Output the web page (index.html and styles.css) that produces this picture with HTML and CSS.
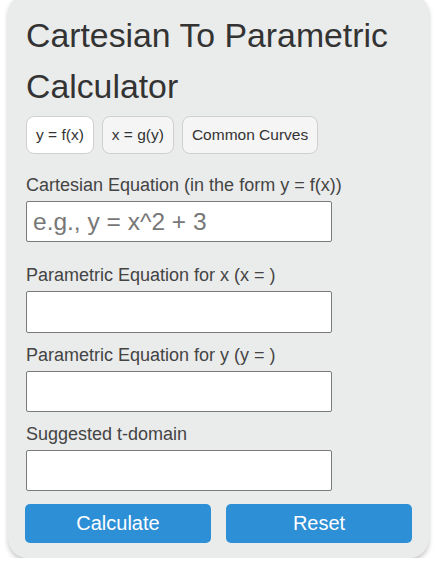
FILE: index.html
```html
<!DOCTYPE html>
<html>
<head>
<meta charset="utf-8">
<link rel="stylesheet" href="styles.css">
</head>
<body>
<div class="card">
  <h1 class="title">Cartesian To Parametric Calculator</h1>
  <div class="tabs">
    <button class="tab active">y = f(x)</button>
    <button class="tab">x = g(y)</button>
    <button class="tab">Common Curves</button>
  </div>
  <div class="field first">
    <label class="label">Cartesian Equation (in the form y = f(x))</label>
    <input class="input" type="text" placeholder="e.g., y = x^2 + 3">
  </div>
  <div class="field wide">
    <label class="label">Parametric Equation for x (x = )</label>
    <input class="input tall" type="text">
  </div>
  <div class="field">
    <label class="label">Parametric Equation for y (y = )</label>
    <input class="input" type="text">
  </div>
  <div class="field">
    <label class="label">Suggested t-domain</label>
    <input class="input" type="text">
  </div>
  <div class="actions">
    <button class="btn">Calculate</button>
    <button class="btn">Reset</button>
  </div>
</div>
</body>
</html>
```
FILE: styles.css
```css
html, body {
  margin: 0;
  padding: 0;
  background: #ffffff;
}
body {
  font-family: "Liberation Sans", Arial, sans-serif;
  color: #333;
}
.card {
  box-sizing: border-box;
  width: 421px;
  margin: -6px 0 0 8px;
  padding: 16px 17px 15px 17px;
  background: #eaebeb;
  border-radius: 20px;
  box-shadow: 0 3px 5px rgba(0, 0, 0, 0.22);
}
.title {
  margin: 0 0 4px 1px;
  font-size: 33.8px;
  font-weight: normal;
  line-height: 51px;
  color: #333;
}
.tabs {
  display: flex;
  gap: 8px;
  padding-left: 1px;
}
.tab {
  height: 38px;
  padding: 0 9px;
  border: 1px solid #cfcfcf;
  border-radius: 8px;
  background: #f5f5f5;
  font-family: "Liberation Sans", Arial, sans-serif;
  font-size: 15.5px;
  color: #333;
}
.tab.active {
  background: #ffffff;
}
.field {
  display: flex;
  flex-direction: column;
  align-items: flex-start;
  gap: 5px;
  margin-top: 11px;
  padding-left: 1px;
}
.field.first {
  margin-top: 20px;
}
.field.wide {
  margin-top: 22px;
}
.label {
  font-size: 18px;
  line-height: 22px;
  color: #444;
}
.input {
  box-sizing: border-box;
  width: 306px;
  height: 41px;
  margin: 0;
  padding: 0 6px;
  border: 1px solid #7a7a7a;
  border-radius: 2px;
  background: #fff;
  font-family: "Liberation Sans", Arial, sans-serif;
  font-size: 24.5px;
  color: #333;
}
.input.tall {
  height: 42px;
}
.input::placeholder {
  color: #777;
}
.actions {
  display: flex;
  gap: 15px;
  margin-top: 13px;
}
.btn {
  flex: 1;
  height: 39px;
  border: none;
  border-radius: 5px;
  background: #2d8fd6;
  color: #fff;
  font-family: "Liberation Sans", Arial, sans-serif;
  font-size: 20px;
}
```
